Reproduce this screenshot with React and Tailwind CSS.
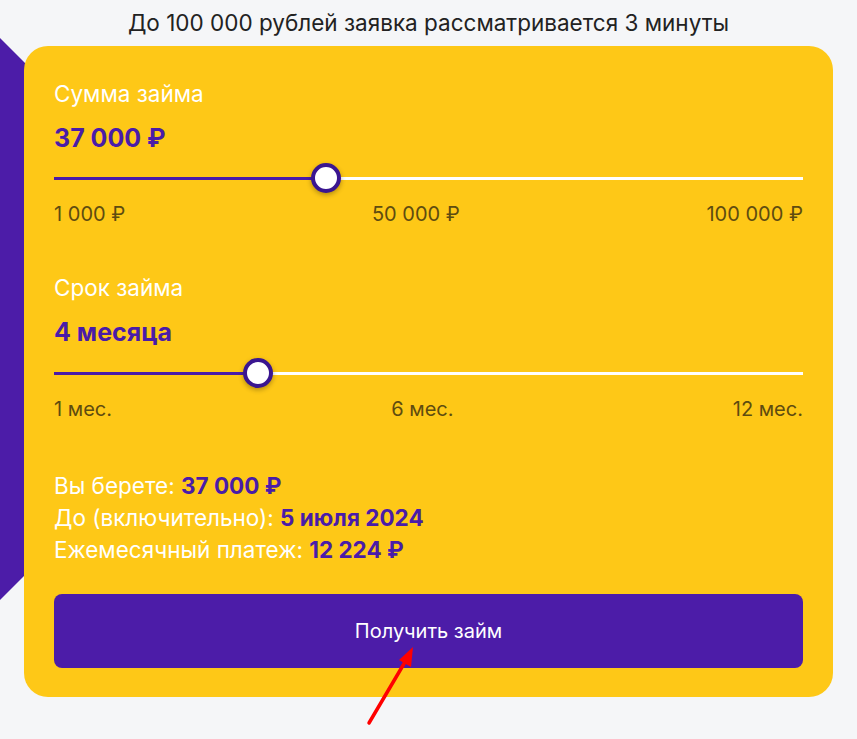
import { useState } from "react";

const font = { fontFamily: "Inter, 'Noto Sans', sans-serif" };

function Slider({ min, max, value, onChange, labels }) {
  const pct = ((value - min) / (max - min)) * 100;
  return (
    <div>
      <div className="relative h-[30px]">
        <div className="absolute left-0 right-0 top-[14px] h-[3px] bg-white" />
        <div
          className="absolute left-0 top-[14px] h-[3px] bg-[#4a1ca8]"
          style={{ width: `${pct}%` }}
        />
        <div
          className="absolute top-0 w-[30px] h-[30px] -ml-[15px] rounded-full bg-white border-[4px] border-[#3a1690] shadow-[0_2px_5px_rgba(0,0,0,0.3)]"
          style={{ left: `${pct}%` }}
        />
        <input
          type="range"
          min={min}
          max={max}
          value={value}
          onChange={(e) => onChange(Number(e.target.value))}
          className="absolute inset-0 w-full opacity-0 cursor-pointer"
        />
      </div>
      <div className="flex justify-between mt-[9px] text-[20px] leading-[24px] text-[#5e4c10]">
        {labels.map((l) => (
          <span key={l}>{l}</span>
        ))}
      </div>
    </div>
  );
}

function monthsLabel(n) {
  if (n === 1) return "1 месяц";
  if (n >= 2 && n <= 4) return `${n} месяца`;
  return `${n} месяцев`;
}

export default function App() {
  const [amount, setAmount] = useState(37000);
  const [term, setTerm] = useState(4);
  const fmt = (n) => n.toLocaleString("ru-RU").replace(/\u00a0|\u202f/g, " ");

  return (
    <div className="relative min-h-screen bg-[#f5f6f8] overflow-hidden" style={font}>
      <svg className="absolute left-0 top-0" width="60" height="640">
        <polygon points="0,38 50,88 50,550 0,600" fill="#4c1ca8" />
      </svg>

      <div className="h-[46px] flex items-center justify-center text-[22.5px] text-[#222]">
        До 100 000 рублей заявка рассматривается 3 минуты
      </div>

      <div className="relative mx-[24px] rounded-[24px] bg-[#fec817] px-[30px] pt-[34px] pb-[29px]">
        <div className="text-[22.5px] leading-[28px] text-white">Сумма займа</div>
        <div className="mt-[15px] text-[25px] leading-[30px] font-bold text-[#4a1ca8]">
          {fmt(amount)} ₽
        </div>
        <div className="mt-[10px]">
          <Slider
            min={1000}
            max={100000}
            value={amount}
            onChange={setAmount}
            labels={["1 000 ₽", "50 000 ₽", "100 000 ₽"]}
          />
        </div>

        <div className="mt-[48px] text-[22.5px] leading-[28px] text-white">Срок займа</div>
        <div className="mt-[15px] text-[25px] leading-[30px] font-bold text-[#4a1ca8]">
          {monthsLabel(term)}
        </div>
        <div className="mt-[11px]">
          <Slider
            min={1}
            max={12}
            value={term}
            onChange={setTerm}
            labels={["1 мес.", "6 мес.", "12 мес."]}
          />
        </div>

        <div className="mt-[49px] text-[22.5px] leading-[32px] text-white">
          <div>
            Вы берете: <b className="text-[#4a1ca8]">{fmt(amount)} ₽</b>
          </div>
          <div>
            До (включительно): <b className="text-[#4a1ca8]">5 июля 2024</b>
          </div>
          <div>
            Ежемесячный платеж:{" "}
            <b className="text-[#4a1ca8]">{fmt(Math.round((amount * 1.3215) / term))} ₽</b>
          </div>
        </div>

        <button className="mt-[28px] w-full h-[74px] rounded-[8px] bg-[#4c1ca8] text-white text-[20px]">
          Получить займ
        </button>
      </div>

      <svg className="absolute left-0 top-0 pointer-events-none" width="857" height="739">
        <line x1="369" y1="723" x2="405" y2="662" stroke="#ff0000" strokeWidth="3.5" strokeLinecap="round" />
        <polygon points="413,647 399,660 411,667" fill="#ff0000" />
      </svg>
    </div>
  );
}
